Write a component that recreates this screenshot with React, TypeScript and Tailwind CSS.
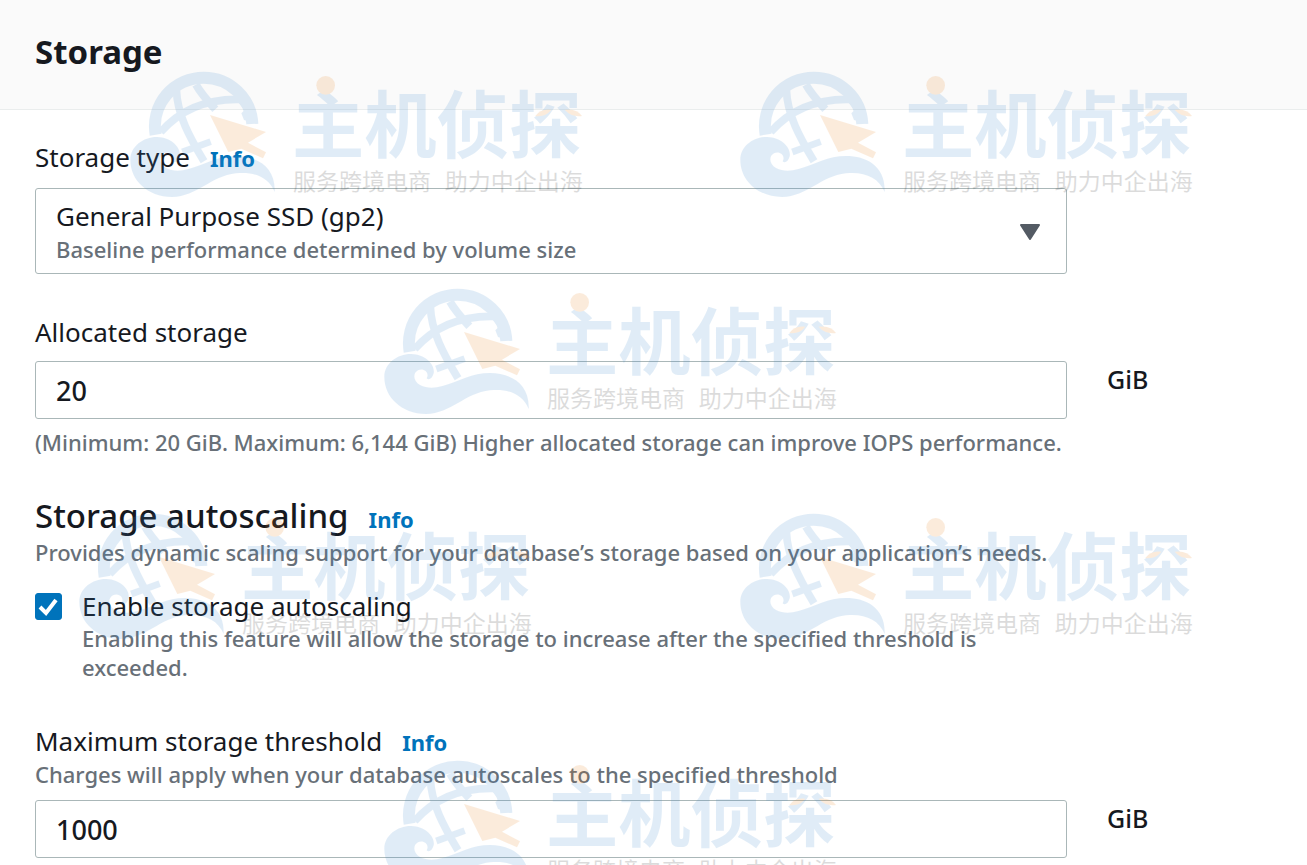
import { useState } from "react";
import type { ReactNode } from "react";

const VOLUME_TYPES = [
  {
    id: "gp2",
    title: "General Purpose SSD (gp2)",
    description: "Baseline performance determined by volume size",
  },
];

const WATERMARKS = [
  "left-[130px] top-[70px]",
  "left-[740px] top-[70px]",
  "left-[384px] top-[287px]",
  "left-[79px] top-[512px]",
  "left-[740px] top-[512px]",
  "left-[384px] top-[759px]",
];

function Watermark({ className }: { className: string }) {
  return (
    <svg
      viewBox="30 30 1359 390"
      className={`absolute h-[130px] w-[453px] overflow-visible opacity-15 ${className}`}
      aria-hidden="true"
    >
      {/* globe */}
      <g fill="none" stroke="#3a88cf">
        <path d="M107 224 A146 146 0 0 1 251 53 A146 146 0 0 1 397 192" strokeWidth="36" />
        <path d="M169 88 C172 165 208 230 252 304" strokeWidth="23" />
        <path d="M228 74 C240 96 262 122 286 148" strokeWidth="24" />
        <path d="M122 216 C180 150 262 116 358 118" strokeWidth="23" />
        <path d="M187 276 L272 245" strokeWidth="20" />
      </g>
      <path d="M340 110 L392 150 L413 192 L372 180 L364 160 L374 150 Z" fill="#3a88cf" />
      {/* wave */}
      <path
        d="M31 300 C31 258 72 230 112 231 C154 232 184 263 179 289 C175 305 164 311 158 304 C168 286 148 272 132 280 C116 289 117 311 138 324 C188 350 250 306 310 292 C382 278 468 302 464 396 C446 352 402 334 348 340 C272 348 232 410 156 411 C82 410 31 360 31 300 Z"
        fill="#3a88cf"
      />
      {/* pointer */}
      <path d="M270 165 L438 216 L384 248 L438 277 L429 295 L364 266 L325 276 Z" fill="#eb8016" />

      <text
        x="516"
        y="276"
        fontSize="217"
        fill="#3a88cf"
        className="font-['Noto_Sans_CJK_SC',sans-serif] font-bold"
      >
        主机侦探
      </text>
      <circle cx="617" cy="76" r="28" fill="#eb8016" />
      <path d="M1246 168 Q1262 144 1294 149 Q1276 172 1246 168 Z" fill="#eb8016" />
      <path d="M1386 168 Q1370 144 1334 149 Q1354 172 1386 168 Z" fill="#eb8016" />

      <g fontSize="69" fill="#161616" className="font-['Noto_Sans_CJK_SC',sans-serif] font-normal">
        <text x="519" y="389">服务跨境电商</text>
        <text x="974" y="389">助力中企出海</text>
      </g>
    </svg>
  );
}

function InfoLink() {
  return (
    <a href="#info" className="ml-5 text-[22px] font-bold text-[#0073bb]">
      Info
    </a>
  );
}

function FieldRow({ unit, children }: { unit?: string; children: ReactNode }) {
  return (
    <div className="flex gap-10">
      <div className="min-w-0 flex-1">{children}</div>
      <div className="w-[165px] shrink-0 text-[25px] leading-9">{unit}</div>
    </div>
  );
}

function App() {
  const [volumeType, setVolumeType] = useState("gp2");
  const [allocated, setAllocated] = useState("20");
  const [autoscaling, setAutoscaling] = useState(true);
  const [threshold, setThreshold] = useState("1000");

  const selected = VOLUME_TYPES.find((v) => v.id === volumeType);

  return (
    <main className="relative min-h-screen overflow-hidden bg-white font-['Noto_Sans',sans-serif] font-medium text-[#16191f]">
      <header className="border-b border-[#eaeded] bg-[#fafafa] px-[35px] pt-[30px] pb-[35px]">
        <h1 className="text-[33px] leading-11 font-bold">Storage</h1>
      </header>

      <form className="px-[35px] pt-[29px] pb-2">
        <div className="text-[26px] leading-9 font-normal">
          <label htmlFor="storage-type">Storage type</label>
          <InfoLink />
        </div>
        <div className="mt-3">
          <FieldRow>
            <div className="flex items-center rounded-[3px] border border-[#aab7b8] pt-2.5 pr-[26px] pb-2 pl-5">
              <div className="flex-1">
                <select
                  id="storage-type"
                  value={volumeType}
                  onChange={(e) => setVolumeType(e.target.value)}
                  className="block w-full appearance-none bg-transparent text-[26px] leading-[34px] font-normal outline-none"
                >
                  {VOLUME_TYPES.map((v) => (
                    <option key={v.id} value={v.id}>
                      {v.title}
                    </option>
                  ))}
                </select>
                <p className="text-[22px] leading-8 text-[#687078]">{selected?.description}</p>
              </div>
              <svg viewBox="0 0 20 16" className="h-4 w-5" aria-hidden="true">
                <path
                  d="M1 1 H19 L10 15 Z"
                  fill="#545b64"
                  stroke="#545b64"
                  strokeWidth="2"
                  strokeLinejoin="round"
                />
              </svg>
            </div>
          </FieldRow>
        </div>

        <label htmlFor="allocated" className="mt-10 block text-[26px] leading-9 font-normal">
          Allocated storage
        </label>
        <div className="mt-[11px]">
          <FieldRow unit="GiB">
            <input
              id="allocated"
              value={allocated}
              onChange={(e) => setAllocated(e.target.value)}
              className="block h-[58px] w-full rounded-[3px] border border-[#aab7b8] px-5 text-[27px] outline-none"
            />
          </FieldRow>
        </div>
        <p className="mt-[9px] text-[22px] leading-[29px] text-[#687078]">
          (Minimum: 20 GiB. Maximum: 6,144 GiB) Higher allocated storage can improve IOPS performance.
        </p>

        <h2 className="mt-10 text-[33px] leading-[38px]">
          Storage autoscaling
          <InfoLink />
        </h2>
        <p className="text-[22px] leading-[29px] text-[#687078]">
          Provides dynamic scaling support for your database’s storage based on your application’s needs.
        </p>

        <div className="mt-[21px] flex gap-5">
          <span className="mt-[5px] grid size-[27px] shrink-0">
            <input
              id="autoscaling"
              type="checkbox"
              checked={autoscaling}
              onChange={(e) => setAutoscaling(e.target.checked)}
              className="col-start-1 row-start-1 size-full appearance-none rounded-[3px] border border-[#aab7b8] checked:border-[#0073bb] checked:bg-[#0073bb]"
            />
            {autoscaling && (
              <svg
                viewBox="0 0 27 27"
                className="pointer-events-none col-start-1 row-start-1"
                aria-hidden="true"
              >
                <path d="M5 14 L11 20 L21 7" fill="none" stroke="#fff" strokeWidth="4" />
              </svg>
            )}
          </span>
          <div className="max-w-[940px]">
            <label htmlFor="autoscaling" className="block text-[26px] leading-9 font-normal">
              Enable storage autoscaling
            </label>
            <p className="text-[22px] leading-[29px] text-[#687078]">
              Enabling this feature will allow the storage to increase after the specified threshold is
              exceeded.
            </p>
          </div>
        </div>

        <div className="mt-[41px] text-[26px] leading-9 font-normal">
          <label htmlFor="threshold">Maximum storage threshold</label>
          <InfoLink />
        </div>
        <p className="text-[22px] leading-[29px] text-[#687078]">
          Charges will apply when your database autoscales to the specified threshold
        </p>
        <div className="mt-[11px]">
          <FieldRow unit="GiB">
            <input
              id="threshold"
              value={threshold}
              onChange={(e) => setThreshold(e.target.value)}
              className="block h-[58px] w-full rounded-[3px] border border-[#aab7b8] px-5 text-[27px] outline-none"
            />
          </FieldRow>
        </div>
      </form>

      <div className="pointer-events-none absolute inset-0 overflow-hidden">
        {WATERMARKS.map((position) => (
          <Watermark key={position} className={position} />
        ))}
      </div>
    </main>
  );
}

export default App;
